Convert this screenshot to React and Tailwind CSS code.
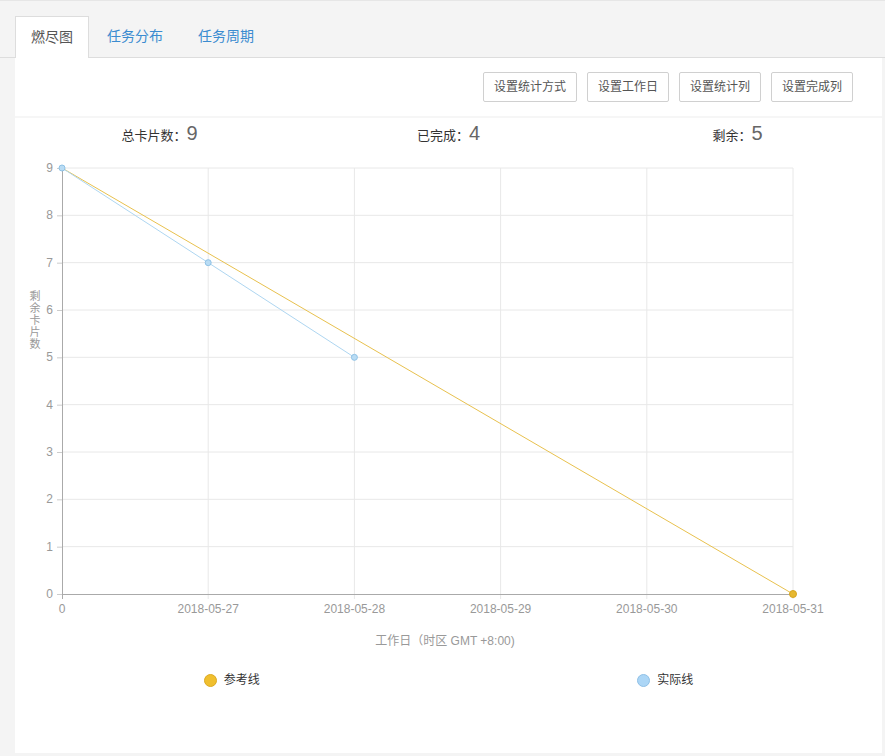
import React from "react";

const font = { fontFamily: '"Liberation Sans", "Noto Sans CJK SC", sans-serif' };

const X0 = 47;
const X1 = 778;
const Y0 = 18;
const Y1 = 444;
const xs = [0, 1, 2, 3, 4, 5].map((i) => X0 + ((X1 - X0) * i) / 5);
const yOf = (v) => Y1 - ((Y1 - Y0) * v) / 9;
const xLabels = ["0", "2018-05-27", "2018-05-28", "2018-05-29", "2018-05-30", "2018-05-31"];
const actual = [9, 7, 5];

const Chart = () => {
  return (
    <svg width="867" height="510" className="block mt-[2px]" style={font}>
      {/* grid */}
      {[1, 2, 3, 4, 5, 6, 7, 8, 9].map((v) => (
        <line key={"h" + v} x1={X0} x2={X1} y1={yOf(v)} y2={yOf(v)} stroke="#e8e8e8" />
      ))}
      {xs.slice(1).map((x, i) => (
        <line key={"v" + i} x1={x} x2={x} y1={Y0} y2={Y1 + 5} stroke="#e8e8e8" />
      ))}
      {/* axes */}
      <line x1={X0 + 0.5} x2={X0 + 0.5} y1={Y0} y2={Y1 + 5} stroke="#aaa" />
      <line x1={X0 - 5} x2={X1} y1={Y1 + 0.5} y2={Y1 + 0.5} stroke="#aaa" />
      {[0, 1, 2, 3, 4, 5, 6, 7, 8, 9].map((v) => (
        <g key={"y" + v}>
          <line x1={X0 - 5} x2={X0} y1={yOf(v) + 0.5} y2={yOf(v) + 0.5} stroke="#ccc" />
          <text x={X0 - 9} y={yOf(v) + 4} fontSize="12" fill="#999" textAnchor="end">
            {v}
          </text>
        </g>
      ))}
      {xLabels.map((l, i) => (
        <text key={l} x={xs[i]} y={463} fontSize="12" fill="#999" textAnchor="middle">
          {l}
        </text>
      ))}
      {/* y title */}
      {["剩", "余", "卡", "片", "数"].map((c, i) => (
        <text key={c} x={20} y={150 + i * 12} fontSize="11" fill="#999" textAnchor="middle">
          {c}
        </text>
      ))}
      <text x={430} y={495} fontSize="12" fill="#999" textAnchor="middle">
        工作日（时区 GMT +8:00)
      </text>
      {/* lines */}
      <line x1={X0} y1={yOf(9)} x2={X1} y2={yOf(0)} stroke="#e8c14e" strokeWidth="1" />
      <polyline
        points={actual.map((v, i) => `${xs[i]},${yOf(v)}`).join(" ")}
        fill="none"
        stroke="#aed6f1"
        strokeWidth="1"
      />
      {actual.map((v, i) => (
        <circle key={"p" + i} cx={xs[i]} cy={yOf(v)} r="3" fill="#b9dcf4" stroke="#8fc2e6" />
      ))}
      <circle cx={X1} cy={yOf(0)} r="3.5" fill="#e6b830" stroke="#d6a520" />
    </svg>
  );
};

const App = () => {
  const buttons = ["设置统计方式", "设置工作日", "设置统计列", "设置完成列"];

  return (
    <div className="w-[885px] h-[756px] bg-[#f4f4f4] border-t border-[#e6e6e6] flex flex-col pl-[15px] pr-[3px] pb-[3px]" style={font}>
      <div className="h-[57px] flex items-end border-b border-[#ddd] -ml-[15px] -mr-[3px] pl-[15px]">
        <div className="h-[42px] w-[74px] bg-white border border-[#ddd] border-b-0 -mb-px flex items-center justify-center text-[14px] text-[#555]">
          燃尽图
        </div>
        <div className="h-[41px] flex items-center ml-[18px] text-[14px] text-[#3b8cd0]">任务分布</div>
        <div className="h-[41px] flex items-center ml-[35px] text-[14px] text-[#3b8cd0]">任务周期</div>
      </div>
      <div className="bg-white h-[58px] flex items-center justify-end gap-[10px] pr-[29px]">
        {buttons.map((b) => (
          <button
            key={b}
            className="h-[30px] px-[10px] border border-[#d0d0d0] rounded-[2px] bg-white text-[12px] text-[#555]"
          >
            {b}
          </button>
        ))}
      </div>
      <div className="h-[2px] bg-[#f6f6f6]" />
      <div className="bg-white flex-1 flex flex-col">
        <div className="grid grid-cols-3 h-[30px] items-center text-center">
          <div className="text-[13px] text-[#333]">
            总卡片数：<span className="text-[20px] text-[#666]">9</span>
          </div>
          <div className="text-[13px] text-[#333]">
            已完成：<span className="text-[20px] text-[#666]">4</span>
          </div>
          <div className="text-[13px] text-[#333]">
            剩余：<span className="text-[20px] text-[#666]">5</span>
          </div>
        </div>
        <Chart />
        <div className="grid grid-cols-2 mt-[11px]">
          <div className="flex items-center justify-center gap-[7px] text-[12px] text-[#333]">
            <span className="w-[13px] h-[13px] rounded-full bg-[#f0bf2e] border border-[#dcaa22]" />
            参考线
          </div>
          <div className="flex items-center justify-center gap-[7px] text-[12px] text-[#333]">
            <span className="w-[13px] h-[13px] rounded-full bg-[#acd6f6] border border-[#8fc0e6]" />
            实际线
          </div>
        </div>
      </div>
    </div>
  );
};

export default App;
